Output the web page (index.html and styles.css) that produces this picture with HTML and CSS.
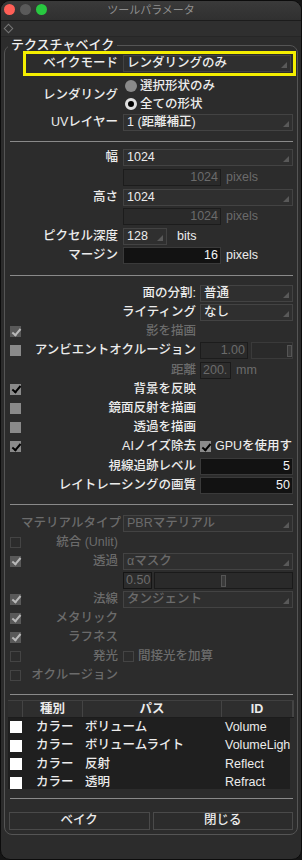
FILE: index.html
```html
<!DOCTYPE html>
<html lang="ja">
<head>
    <meta charset="UTF-8">
    <title>ツールパラメータ</title>
    <link rel="stylesheet" href="styles.css">
</head>
<body>
<div class="window">
    <div class="titlebar">
        <div class="lights">
            <span class="light red"></span>
            <span class="light grey"></span>
            <span class="light green"></span>
        </div>
        <div class="title">ツールパラメータ</div>
    </div>
    <div class="toolbar"><span class="pin"></span></div>

    <fieldset class="group">
        <legend>テクスチャベイク</legend>

        <!-- ベイク設定 -->
        <div class="highlight">
            <span class="label hl-label">ベイクモード</span>
            <div class="combo wide">レンダリングのみ</div>
        </div>
        <div class="radio-block">
            <span class="label">レンダリング</span>
            <div class="radios">
                <div class="radio-row"><span class="radio"></span>選択形状のみ</div>
                <div class="radio-row"><span class="radio on"></span>全ての形状</div>
            </div>
        </div>
        <div class="row">
            <span class="label">UVレイヤー</span>
            <div class="combo wide">1 (距離補正)</div>
        </div>

        <div class="sep"></div>

        <!-- サイズ -->
        <div class="sec-size">
            <div class="row">
                <span class="label">幅</span>
                <div class="combo wide">1024</div>
            </div>
            <div class="row">
                <span class="label"></span>
                <div class="field num off">1024</div><span class="unit off">pixels</span>
            </div>
            <div class="row">
                <span class="label">高さ</span>
                <div class="combo wide">1024</div>
            </div>
            <div class="row">
                <span class="label"></span>
                <div class="field num off">1024</div><span class="unit off">pixels</span>
            </div>
            <div class="row">
                <span class="label">ピクセル深度</span>
                <div class="combo short">128</div><span class="unit bits">bits</span>
            </div>
            <div class="row">
                <span class="label">マージン</span>
                <div class="field num dark">16</div><span class="unit">pixels</span>
            </div>
        </div>

        <div class="sep"></div>

        <!-- レンダリング設定 -->
        <div class="sec-render">
            <div class="row">
                <span class="check none"></span>
                <span class="label">面の分割:</span>
                <div class="combo wide">普通</div>
            </div>
            <div class="row">
                <span class="check none"></span>
                <span class="label">ライティング</span>
                <div class="combo wide">なし</div>
            </div>
            <div class="row off">
                <span class="check dis on"></span>
                <span class="label">影を描画</span>
            </div>
            <div class="row">
                <span class="check"></span>
                <span class="label">アンビエントオクルージョン</span>
                <div class="field num off ao">1.00</div>
                <div class="slider ao-slider"><span class="thumb" style="left: 88%"></span></div>
            </div>
            <div class="row off">
                <span class="check none"></span>
                <span class="label">距離</span>
                <div class="field dist">200.</div><span class="unit">mm</span>
            </div>
            <div class="row">
                <span class="check on"></span>
                <span class="label">背景を反映</span>
            </div>
            <div class="row">
                <span class="check"></span>
                <span class="label">鏡面反射を描画</span>
            </div>
            <div class="row">
                <span class="check"></span>
                <span class="label">透過を描画</span>
            </div>
            <div class="row">
                <span class="check on"></span>
                <span class="label">AIノイズ除去</span>
                <div class="sub-check"><span class="check on"></span><span class="clip">GPUを使用す</span></div>
            </div>
            <div class="row">
                <span class="check none"></span>
                <span class="label">視線追跡レベル</span>
                <div class="field num dark wide">5</div>
            </div>
            <div class="row">
                <span class="check none"></span>
                <span class="label">レイトレーシングの画質</span>
                <div class="field num dark wide">50</div>
            </div>
        </div>

        <div class="sep"></div>

        <!-- マテリアル -->
        <div class="sec-material off">
            <div class="row">
                <span class="check none"></span>
                <span class="label">マテリアルタイプ</span>
                <div class="combo wide">PBRマテリアル</div>
            </div>
            <div class="row">
                <span class="check dis"></span>
                <span class="label">統合 (Unlit)</span>
            </div>
            <div class="row">
                <span class="check dis on"></span>
                <span class="label">透過</span>
                <div class="combo wide">αマスク</div>
            </div>
            <div class="row">
                <span class="check none"></span>
                <span class="label"></span>
                <div class="field alpha">0.50</div>
                <div class="slider alpha-slider"><span class="thumb" style="left: 48%"></span></div>
            </div>
            <div class="row">
                <span class="check dis on"></span>
                <span class="label">法線</span>
                <div class="combo wide">タンジェント</div>
            </div>
            <div class="row">
                <span class="check dis on"></span>
                <span class="label">メタリック</span>
            </div>
            <div class="row">
                <span class="check dis on"></span>
                <span class="label">ラフネス</span>
            </div>
            <div class="row">
                <span class="check dis"></span>
                <span class="label">発光</span>
                <div class="sub-check"><span class="check dis"></span>間接光を加算</div>
            </div>
            <div class="row">
                <span class="check dis"></span>
                <span class="label">オクルージョン</span>
            </div>
        </div>

        <div class="sep"></div>

        <!-- 出力リスト -->
        <div class="table">
            <div class="thead">
                <span class="c-chk"></span>
                <span class="c-kind">種別</span>
                <span class="c-path">パス</span>
                <span class="c-id">ID</span>
                <span class="c-bar"></span>
            </div>
            <div class="tbody">
                <div class="trow"><span class="c-chk"><span class="box"></span></span><span class="c-kind">カラー</span><span class="c-path">ボリューム</span><span class="c-id">Volume</span></div>
                <div class="trow"><span class="c-chk"><span class="box"></span></span><span class="c-kind">カラー</span><span class="c-path">ボリュームライト</span><span class="c-id">VolumeLigh</span></div>
                <div class="trow"><span class="c-chk"><span class="box"></span></span><span class="c-kind">カラー</span><span class="c-path">反射</span><span class="c-id">Reflect</span></div>
                <div class="trow"><span class="c-chk"><span class="box"></span></span><span class="c-kind">カラー</span><span class="c-path">透明</span><span class="c-id">Refract</span></div>
            </div>
        </div>

        <div class="sep"></div>

        <div class="buttons">
            <button class="button">ベイク</button>
            <button class="button">閉じる</button>
        </div>
    </fieldset>
</div>
</body>
</html>
```

FILE: styles.css
```css
body {
    margin: 0;
    background: #151515;
    font-family: "Liberation Sans", "Noto Sans CJK JP", sans-serif;
    font-size: 12.5px;
    font-weight: 500;
    line-height: 15px;
    color: #ececec;
}
.window {
    width: 300px;
    height: 858px;
    background: #2c2c2c;
    border: 1px solid #0c0c0c;
    border-radius: 10px;
    overflow: hidden;
    position: relative;
}
.titlebar {
    height: 19px;
    background: linear-gradient(#3a3a3a, #303030);
    border-bottom: 1px solid #1c1c1c;
    position: relative;
}
.lights {
    display: flex;
    gap: 5px;
    padding: 3px 0 0 3px;
}
.light {
    width: 11px;
    height: 11px;
    border-radius: 50%;
}
.red { background: #fe5f57; }
.grey { background: #5a5a5a; }
.green { background: #28c840; }
.title {
    position: absolute;
    left: 0;
    right: 0;
    top: 2px;
    text-align: center;
    font-size: 11px;
    font-weight: normal;
    color: #8f8f8f;
}
.toolbar {
    height: 15px;
    background: #2f2f2f;
    border-bottom: 1px solid #262626;
    padding-left: 4px;
}
.pin {
    display: inline-block;
    width: 5px;
    height: 5px;
    margin-top: 4px;
    border: 1.5px solid #777;
    transform: rotate(45deg);
}
.group {
    margin: 1px 0 0 3px;
    width: 294px;
    min-width: 0;
    height: 797px;
    box-sizing: border-box;
    border: 1px solid #555;
    border-radius: 8px;
    padding: 0;
}
.group legend {
    margin-left: 3px;
    padding: 0 3px;
    font-size: 13px;
    line-height: 14px;
    color: #f0f0f0;
}
.row {
    display: flex;
    align-items: center;
    height: 19.2px;
    white-space: nowrap;
}
.label {
    width: 113px;
    flex: none;
    text-align: right;
    margin-right: 5px;
}
.off, .off .label, .off .unit { color: #6b6b6b; }

.highlight {
    margin: -1px 1px 0 18px;
    border: 3px solid #f4ee00;
    height: 19px;
    display: flex;
    align-items: center;
    white-space: nowrap;
}
.hl-label { width: 92px; }
.highlight .combo { margin-right: 2px; }

.combo {
    position: relative;
    height: 15px;
    line-height: 15px;
    border: 1px solid #434343;
    background: #2f2f2f;
    padding: 0 3px;
    overflow: hidden;
}
.combo::after {
    content: "";
    position: absolute;
    right: 3px;
    bottom: 3px;
    border-left: 6px solid transparent;
    border-bottom: 6px solid #595959;
}
.wide { flex: 1; min-width: 0; margin-right: 4px; }
.short { width: 36px; }

.radio-block {
    display: flex;
    align-items: center;
    margin-top: 2px;
}
.radio-block .label { margin-right: 7px; }
.radio-row {
    display: flex;
    align-items: center;
    height: 18px;
}
.radio {
    width: 12px;
    height: 12px;
    border-radius: 50%;
    background: #8a8a8a;
    margin-right: 3px;
    box-sizing: border-box;
}
.radio.on {
    background: #000;
    border: 3px solid #e0e0e0;
}
.radios { margin-top: -1px; }

.sep {
    margin: 9px 4px 0 5px;
    border-top: 1px solid #8a8a8a;
    height: 0;
}

.field {
    height: 15px;
    line-height: 15px;
    border: 1px solid #3a3a3a;
    background: #2c2c2c;
    padding: 0 2px;
}
.num { text-align: right; width: 92px; }
.num.off { color: #6b6b6b; border-color: #1c1c1c; background: #2a2a2a; }
.dark { background: #121212; border-color: #3a3a3a; color: #f5f5f5; }
.num.wide { width: auto; }
.unit { margin-left: 5px; }
.bits { margin-left: 10px; }

.sec-size { margin-top: 6px; }
.sec-size .row { height: 19.6px; }
.sec-render { margin-top: 8px; }
.sec-material { margin-top: 9px; }

.check {
    width: 11px;
    height: 11px;
    flex: none;
    margin: 0 0 0 5px;
    background: #8a8a8a;
    position: relative;
    box-sizing: border-box;
}
.check.none { background: none; }
.check.on::after {
    content: "";
    position: absolute;
    left: 3.5px;
    top: 0.5px;
    width: 3px;
    height: 7px;
    border: solid #000;
    border-width: 0 2px 2px 0;
    transform: rotate(40deg);
}
.check.dis {
    background: #2c2c2c;
    border: 1px solid #444;
}
.check.dis.on { background: #595959; border-color: #595959; }
.check.dis.on::after { border-color: #b9b9b9; left: 2.5px; top: -0.5px; }
.sec-render .label { width: 175px; margin-right: 4px; }
.sec-material .label { width: 97px; }
.sec-material .row { height: 19px; }

.ao { width: 42px; margin-right: 3px; }
.slider {
    position: relative;
    height: 15px;
    border: 1px solid #3a3a3a;
    background: #2a2a2a;
    margin-right: 4px;
    flex: 1;
}
.thumb {
    position: absolute;
    top: 2px;
    width: 3px;
    height: 10px;
    border: 1px solid #555;
    background: #3a3a3a;
}
.sub-check {
    display: flex;
    align-items: center;
    gap: 4px;
    overflow: hidden;
    flex: 1;
    margin-right: 4px;
}
.sub-check .check { margin-left: 0; }
.clip { overflow: hidden; }
.dist { width: 25px; border-color: #1a1a1a; color: #6b6b6b; }
.alpha { width: 23px; border-color: #151515; margin-right: 2px; }
.alpha-slider { border-color: #1a1a1a; }

.table {
    margin: 5px 3px 0 3px;
}
.thead {
    display: flex;
    height: 16px;
    line-height: 16px;
    background: #2e2e2e;
    border-top: 1px solid #404040;
    border-bottom: 1px solid #1c1c1c;
    font-weight: bold;
    text-align: center;
}
.thead span { border-right: 1px solid #444; box-sizing: border-box; }
.c-chk { width: 15px; flex: none; }
.c-kind { width: 60px; flex: none; }
.c-path { width: 139px; flex: none; }
.c-id { width: 71px; flex: none; }
.c-bar { flex: 1; }
.tbody {
    background: #1f1f1f;
    height: 71px;
    overflow: hidden;
    margin-right: 4px;
}
.trow {
    display: flex;
    height: 18.5px;
    align-items: center;
    white-space: nowrap;
}
.trow .c-kind { padding-left: 13px; box-sizing: border-box; }
.trow .c-path { padding-left: 2px; box-sizing: border-box; }
.trow .c-id { padding-left: 3px; box-sizing: border-box; overflow: hidden; }
.box {
    display: block;
    width: 12px;
    height: 12px;
    background: #fff;
    margin-left: 2px;
}
.buttons {
    display: flex;
    gap: 3px;
    margin: 13px 4px 0 4px;
}
.button {
    flex: 1;
    height: 18px;
    padding: 0;
    font: inherit;
    color: #ececec;
    background: #2c2c2c;
    border: 1px solid #4a4a4a;
}
```
